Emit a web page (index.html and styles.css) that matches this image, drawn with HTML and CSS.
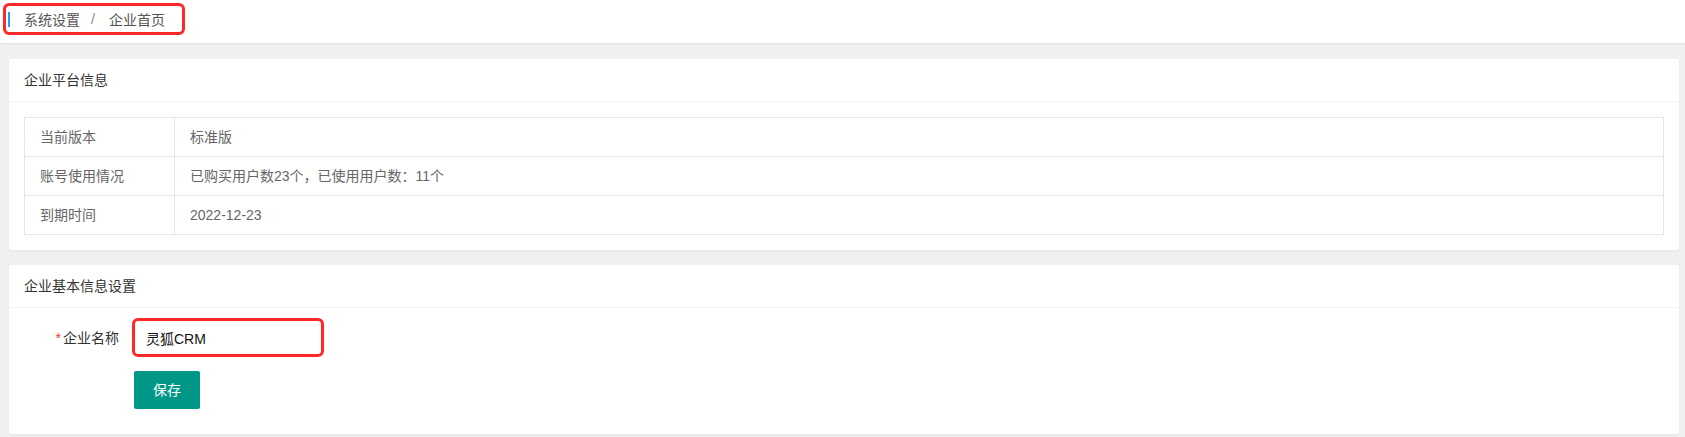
FILE: index.html
```html
<!DOCTYPE html>
<html lang="zh-CN">
<head>
<meta charset="utf-8">
<title>企业首页</title>
<link rel="stylesheet" href="styles.css">
</head>
<body>
<header class="topbar">
  <div class="crumb">
    <span class="crumb-bar"></span>
    <span class="crumb-item">系统设置</span>
    <span class="crumb-sep">/</span>
    <span class="crumb-item">企业首页</span>
  </div>
</header>
<main class="content">
  <section class="card">
    <div class="card-head">企业平台信息</div>
    <div class="card-body card-body-table">
      <table class="info-table">
        <tr><td class="info-label">当前版本</td><td>标准版</td></tr>
        <tr><td class="info-label">账号使用情况</td><td>已购买用户数23个，已使用用户数：11个</td></tr>
        <tr><td class="info-label">到期时间</td><td>2022-12-23</td></tr>
      </table>
    </div>
  </section>
  <section class="card">
    <div class="card-head">企业基本信息设置</div>
    <div class="card-body card-body-form">
      <div class="form-item">
        <label class="form-label"><span class="req">*</span>企业名称</label>
        <input class="form-input" type="text" value="灵狐CRM">
      </div>
      <div class="form-actions">
        <button class="btn" type="button">保存</button>
      </div>
    </div>
  </section>
</main>
</body>
</html>
```

FILE: styles.css
```css
* { box-sizing: border-box; }
html, body {
  margin: 0;
  padding: 0;
}
body {
  background: #f0f0f0;
  font-family: "Liberation Sans", "Noto Sans CJK SC", sans-serif;
  font-size: 14px;
  color: #333;
  height: 437px;
  overflow: hidden;
}
.topbar {
  height: 43px;
  background: #fff;
  padding: 3px 0 0 3px;
  box-shadow: 0 1px 2px rgba(0, 0, 0, 0.06);
  position: relative;
  z-index: 1;
}
.crumb {
  display: flex;
  align-items: center;
  width: 182px;
  height: 32px;
  border: 3px solid #ff2727;
  border-radius: 6px;
  padding-left: 2px;
  color: #555;
  font-size: 14px;
}
.crumb-bar {
  width: 2px;
  height: 15px;
  background: #1e9fff;
  margin-right: 14px;
}
.crumb-sep {
  margin: 0 14px 0 11px;
  color: #888;
}
.content {
  padding: 16px 6px 0 9px;
  display: flex;
  flex-direction: column;
  gap: 15px;
}
.card {
  background: #fff;
  border-radius: 2px;
  box-shadow: 0 1px 2px rgba(0, 0, 0, 0.05);
}
.card-head {
  height: 43px;
  line-height: 42px;
  padding: 0 15px;
  border-bottom: 1px solid #f4f4f4;
  color: #333;
}
.card-body-table {
  padding: 15px;
}
.info-table {
  width: 100%;
  border-collapse: collapse;
  border: 1px solid #e6e6e6;
}
.info-table td {
  border: 1px solid #e6e6e6;
  padding: 9px 15px;
  line-height: 20px;
  color: #666;
}
.info-table td.info-label {
  width: 150px;
}
.card-body-form {
  padding: 10px 15px 25px;
}
.form-item {
  display: flex;
  align-items: center;
  margin-bottom: 14px;
}
.form-label {
  width: 110px;
  padding: 9px 15px 9px 0;
  line-height: 20px;
  text-align: right;
  color: #333;
}
.req {
  color: #ff3030;
  margin-right: 2px;
}
.form-input {
  width: 192px;
  height: 39px;
  margin-left: -2px;
  border: 3px solid #ff2727;
  border-radius: 6px;
  padding: 0 0 0 11px;
  font-family: "Liberation Sans", "Noto Sans CJK SC", sans-serif;
  font-size: 14px;
  color: #111;
  background: #fff;
  outline: none;
}
.form-actions {
  padding-left: 110px;
}
.btn {
  height: 38px;
  padding: 0 19px;
  border: 0;
  border-radius: 2px;
  background: #009688;
  color: #fff;
  font-family: "Liberation Sans", "Noto Sans CJK SC", sans-serif;
  font-size: 14px;
  line-height: 38px;
}
```
